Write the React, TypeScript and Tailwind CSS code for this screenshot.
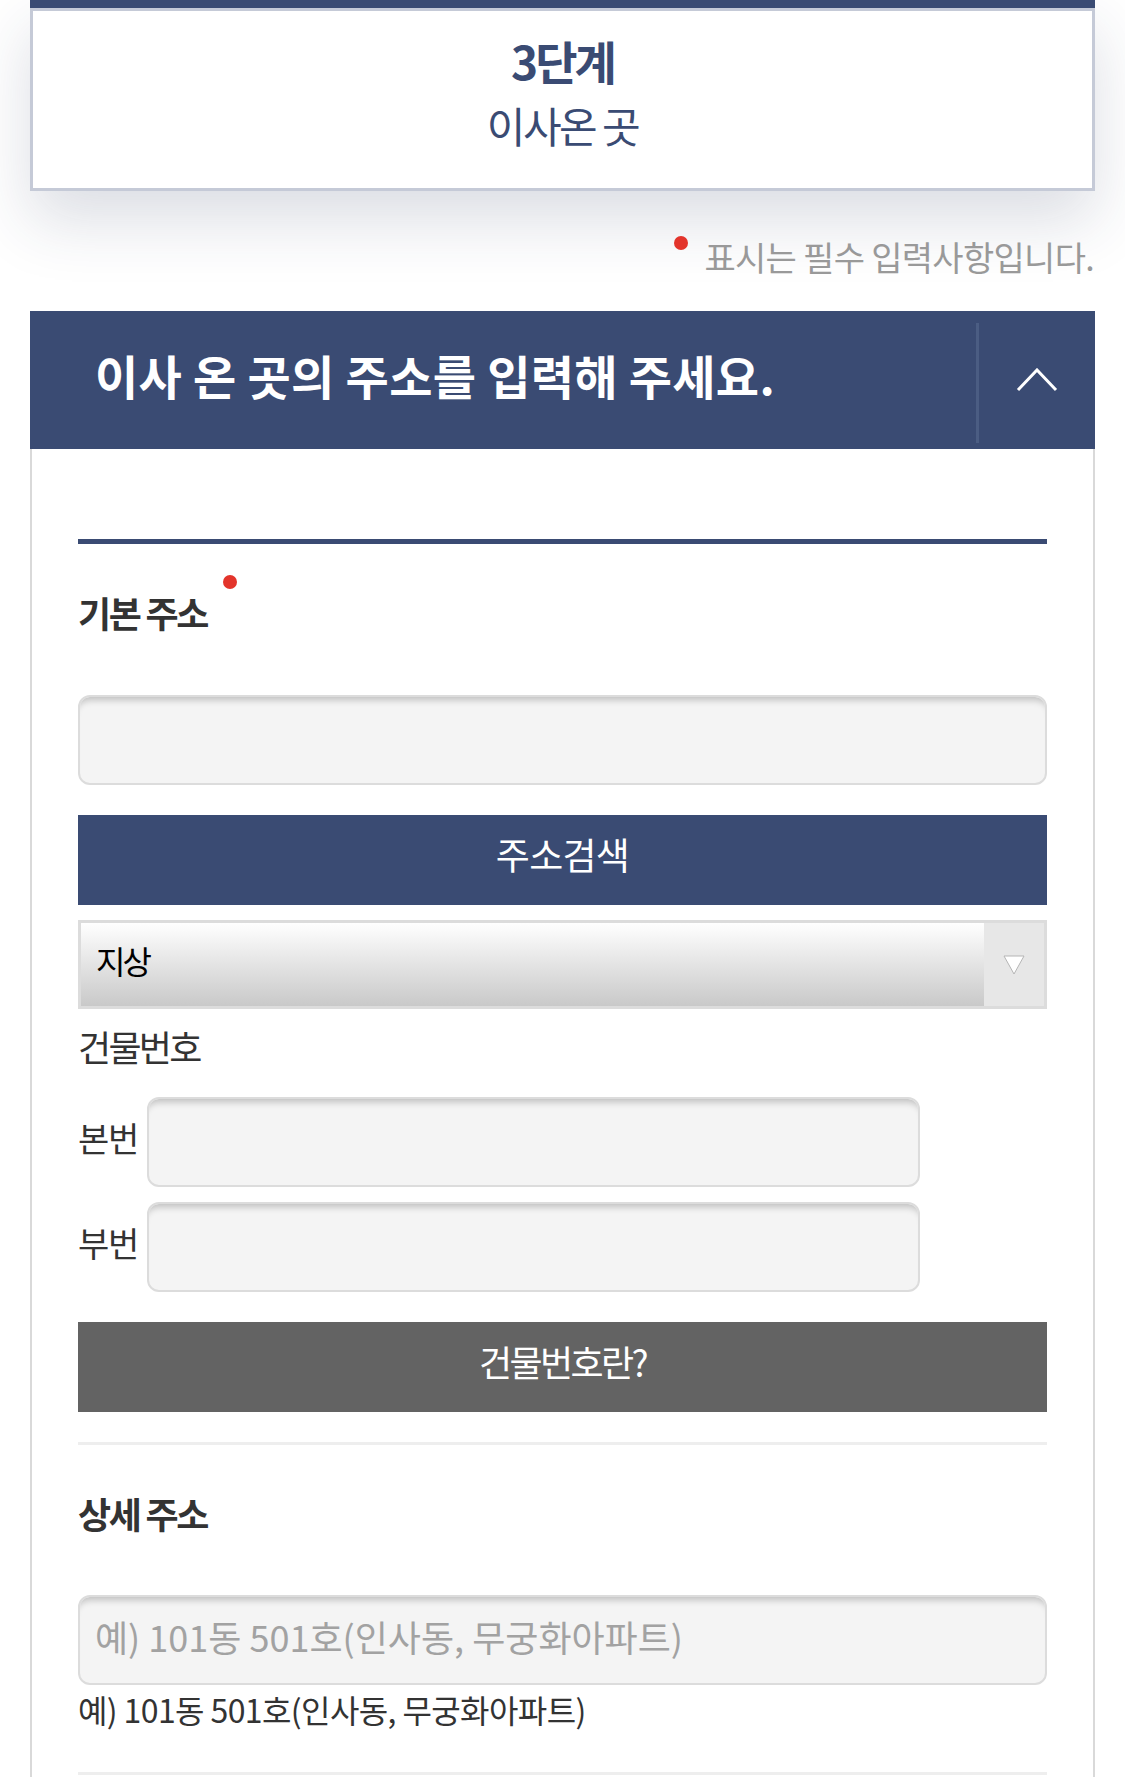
const navy = 'bg-[#3a4b73]'

function TextInput({ placeholder, className = '' }: { placeholder?: string, className?: string }) {
  return (
    <input
      type="text"
      placeholder={placeholder}
      className={`h-[90px] rounded-[12px] border-2 border-[#dcdcdc] bg-[#f4f4f4] pb-[8px] pl-[15px] text-[36px] text-[#333] outline-none shadow-[inset_0_9px_7px_-6px_rgba(0,0,0,0.22)] placeholder:text-[#a2a2a2] ${className}`}
    />
  )
}

function RequiredDot({ className = '' }: { className?: string }) {
  return <span className={`block h-[14px] w-[14px] rounded-full bg-[#e3342b] ${className}`} />
}

export default function App() {
  return (
    <div className="min-h-[1777px] w-[1125px] overflow-hidden bg-white font-['Noto_Sans_CJK_KR','Noto_Sans',sans-serif]">
      {/* 단계 카드 */}
      <div className={`mx-[30px] ${navy} pt-[8px] shadow-[0_30px_60px_rgba(40,50,90,0.16)]`}>
        <div className="flex h-[183px] flex-col items-center border-[3px] border-[#c5cad7] bg-white pt-[26px]">
          <p className="text-[46px] font-bold leading-none tracking-[-3px] text-[#3a4b73]">3단계</p>
          <p className="mt-[21px] text-[42px] leading-none tracking-[-2.5px] text-[#3a4b73]">이사온 곳</p>
        </div>
      </div>

      {/* 필수 안내 */}
      <div className="mx-[31px] mt-[49px] flex items-start justify-end">
        <RequiredDot className="mr-[16px] mt-[-4px]" />
        <p className="text-[34px] leading-none tracking-[-0.7px] text-[#999]">표시는 필수 입력사항입니다.</p>
      </div>

      {/* 섹션 헤더 */}
      <div className={`mx-[30px] mt-[37px] flex h-[138px] ${navy}`}>
        <div className="flex flex-1 items-center pb-[12px] pl-[65px]">
          <h2 className="text-[47px] font-bold leading-none tracking-[0.3px] text-white">이사 온 곳의 주소를 입력해 주세요.</h2>
        </div>
        <div className="mb-[6px] mt-[12px] w-[3px] bg-[#4b5d83]" />
        <div className="flex w-[116px] items-center justify-center">
          <svg width="42" height="24" viewBox="0 0 42 24" fill="none">
            <polyline points="2,22 21,2 40,22" stroke="white" strokeWidth="3" />
          </svg>
        </div>
      </div>

      {/* 입력 영역 */}
      <div className="mx-[30px] border-x-2 border-[#d9d9d9] px-[46px] pt-[90px]">
        <div className={`h-[5px] ${navy}`} />

        <div className="mt-[50px] flex">
          <div className="relative">
            <p className="text-[36px] font-bold leading-none tracking-[-2.3px] text-[#333]">기본 주소</p>
            <RequiredDot className="absolute right-[-30px] top-[-19px]" />
          </div>
        </div>

        <TextInput className="mt-[65px] w-full" />

        <button className={`mt-[30px] flex h-[90px] w-full items-center justify-center pb-[12px] ${navy} text-[37px] leading-none tracking-[-0.7px] text-white`}>
          주소검색
        </button>

        <div className="mt-[15px] flex h-[89px] border-[3px] border-[#dcdcdc]">
          <div className="flex flex-1 items-center bg-gradient-to-b from-white to-[#c9c9c9] pb-[9px] pl-[15px]">
            <span className="text-[32px] leading-none tracking-[-3px] text-black">지상</span>
          </div>
          <div className="flex w-[60px] items-center justify-center bg-[#e7e7e7]">
            <svg width="22" height="22" viewBox="0 0 22 22">
              <polygon points="1,2 21,2 11,20" fill="white" stroke="#b5b5b5" strokeWidth="1" />
            </svg>
          </div>
        </div>

        <p className="mt-[19px] text-[36px] leading-none tracking-[-2.7px] text-[#333]">건물번호</p>

        <div className="mt-[33px] flex items-center">
          <span className="w-[69px] pb-[8px] text-[34px] leading-none tracking-[-1.2px] text-[#333]">본번</span>
          <TextInput className="w-[773px]" />
        </div>
        <div className="mt-[15px] flex items-center">
          <span className="w-[69px] pb-[8px] text-[34px] leading-none tracking-[-1.2px] text-[#333]">부번</span>
          <TextInput className="w-[773px]" />
        </div>

        <button className="mt-[30px] flex h-[90px] w-full items-center justify-center bg-[#636363] pb-[12px] text-[36px] leading-none tracking-[-2.6px] text-white">
          건물번호란?
        </button>

        <div className="mt-[30px] h-[3px] bg-[#eeeeee]" />

        <p className="mt-[50px] text-[36px] font-bold leading-none tracking-[-2.3px] text-[#333]">상세 주소</p>

        <TextInput className="mt-[64px] w-full" placeholder="예) 101동 501호(인사동, 무궁화아파트)" />

        <p className="mt-[8px] text-[32px] leading-none tracking-[-0.6px] text-[#333]">예) 101동 501호(인사동, 무궁화아파트)</p>

        <div className="mt-[47px] h-[3px] bg-[#eeeeee]" />
        <div className="h-[60px]" />
      </div>
    </div>
  )
}
